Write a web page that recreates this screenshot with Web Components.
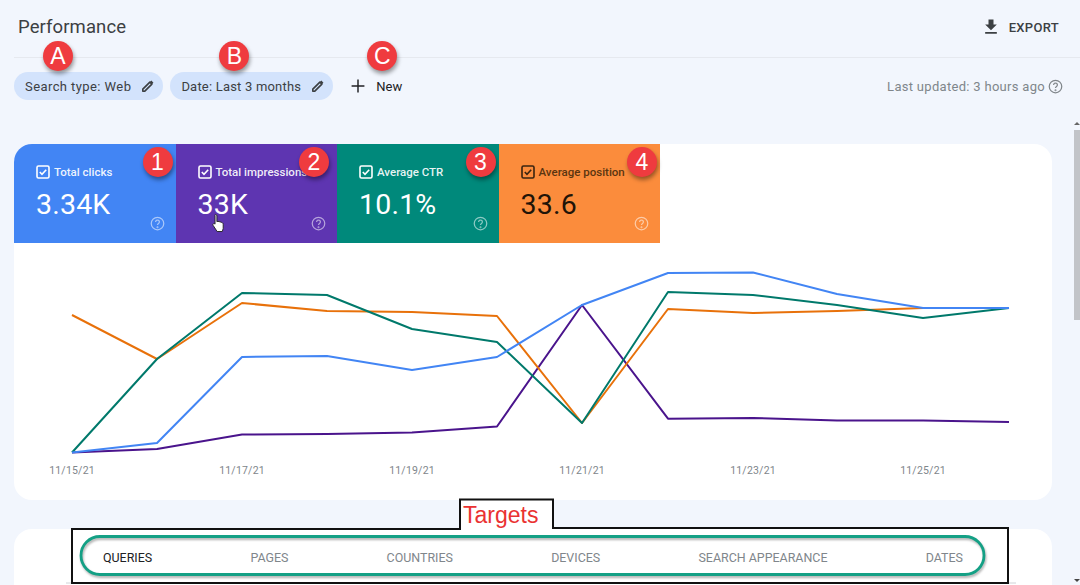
<!DOCTYPE html>
<html>
<head>
<meta charset="utf-8">
<title>Performance</title>
<style>
  html, body { margin: 0; height: 100%; overflow: hidden; background: #f2f6fd; }
  body { font-family: Roboto, "Liberation Sans", sans-serif; }
</style>
</head>
<body>
<perf-page>
  <perf-header slot="header" title="Performance"></perf-header>
  <filter-bar slot="filters">
    <filter-chip label="Search type: Web" mark="A" style="letter-spacing:.42px;--mark-x:29px"></filter-chip>
    <filter-chip label="Date: Last 3 months" mark="B" style="letter-spacing:.2px;--mark-x:49px"></filter-chip>
    <new-button mark="C"></new-button>
  </filter-bar>
  <chart-card slot="chart">
    <metric-tile slot="tiles" label="Total clicks" value="3.34K" color="#4285f4" mark="1"></metric-tile>
    <metric-tile slot="tiles" label="Total impressions" value="33K" color="#5e35b1" mark="2" cursor style="--mark-right:8px"></metric-tile>
    <metric-tile slot="tiles" label="Average CTR" value="10.1%" color="#00897b" mark="3"></metric-tile>
    <metric-tile slot="tiles" label="Average position" value="33.6" color="#fb8c3c" mark="4" dark></metric-tile>
    <line-chart slot="plot"></line-chart>
  </chart-card>
  <tab-card slot="tabs"></tab-card>
</perf-page>

<script>
class MarkBadge extends HTMLElement {
  constructor() {
    super();
    this.attachShadow({mode: 'open'}).innerHTML = `
      <style>
        :host {
          display: flex; align-items: center; justify-content: center;
          width: 30px; height: 30px; border-radius: 50%;
          background: #ef3b3f; color: #fff;
          font: 400 23px "Liberation Sans", Arial, sans-serif; letter-spacing: 0;
          box-shadow: 1px 3px 4px rgba(0,0,0,.4);
        }
      </style>
      <slot></slot>`;
  }
}
customElements.define('mark-badge', MarkBadge);

class PerfPage extends HTMLElement {
  constructor() {
    super();
    this.attachShadow({mode: 'open'}).innerHTML = `
      <style>
        :host { display: block; position: relative; width: 1080px; height: 585px; overflow: hidden; }
        .wrap { display: flex; flex-direction: column; padding-left: 14px; padding-right: 28px; }
        ::slotted([slot=chart]) { margin-top: 44px; }
        ::slotted([slot=tabs]) { margin-top: 29px; }
        .thumb { position: absolute; right: 0; top: 130px; width: 6px; height: 190px; background: #c2c4c8; }
        .arrow { position: absolute; right: 0; width: 0; height: 0; border: 3px solid transparent; }
        .up { top: 119px; border-bottom-color: #666; }
        .down { top: 579px; border-top-color: #444; }
      </style>
      <div class="wrap">
        <slot name="header"></slot>
        <slot name="filters"></slot>
        <slot name="chart"></slot>
        <slot name="tabs"></slot>
      </div>
      <div class="arrow up"></div>
      <div class="thumb"></div>
      <div class="arrow down"></div>`;
  }
}
customElements.define('perf-page', PerfPage);

class PerfHeader extends HTMLElement {
  constructor() {
    super();
    this.attachShadow({mode: 'open'}).innerHTML = `
      <style>
        :host {
          display: flex; align-items: center; justify-content: space-between;
          height: 58px; box-sizing: border-box; margin-right: -28px;
          padding: 0 21px 3px 4px; border-bottom: 1px solid #e6e9ef; color: #3c4043;
        }
        h1 { margin: 0; font: 400 18.5px Roboto, sans-serif; color: #3c4043; letter-spacing: .1px; }
        .export { display: flex; align-items: center; gap: 8px; font: 500 13px Roboto, sans-serif; letter-spacing: .3px; }
        svg { width: 20px; height: 20px; fill: #3c4043; }
      </style>
      <h1></h1>
      <div class="export">
        <svg viewBox="0 0 24 24"><path d="M19 9h-4V3H9v6H5l7 7 7-7zM5 18v2h14v-2H5z"/></svg>
        EXPORT
      </div>`;
    this.shadowRoot.querySelector('h1').textContent = this.getAttribute('title');
  }
}
customElements.define('perf-header', PerfHeader);

class FilterBar extends HTMLElement {
  constructor() {
    super();
    this.attachShadow({mode: 'open'}).innerHTML = `
      <style>
        :host {
          display: flex; align-items: center; gap: 7px;
          height: 28px; margin-top: 14px; margin-right: -11px;
          color: #80868b;
        }
        .right { margin-left: auto; display: flex; align-items: center; gap: 3px; font: 400 13px Roboto, sans-serif; letter-spacing: .3px; }
        svg { width: 15px; height: 15px; fill: none; stroke: #80868b; stroke-width: 2; }
      </style>
      <slot></slot>
      <div class="right">
        Last updated: 3 hours ago
        <svg viewBox="0 0 24 24"><circle cx="12" cy="12" r="10"/><path d="M9 9.5a3 3 0 1 1 4.6 2.5c-1 .7-1.6 1.3-1.6 2.5"/><circle cx="12" cy="18" r=".6"/></svg>
      </div>`;
  }
}
customElements.define('filter-bar', FilterBar);

class FilterChip extends HTMLElement {
  constructor() {
    super();
    this.attachShadow({mode: 'open'}).innerHTML = `
      <style>
        :host {
          display: inline-flex; align-items: center; gap: 9px; position: relative;
          height: 28px; box-sizing: border-box; padding: 0 8px 0 11px;
          border-radius: 14px; background: #d3e3fc; color: #3c4043;
          font: 400 13px Roboto, sans-serif; letter-spacing: .3px; white-space: nowrap;
        }
        svg { width: 15px; height: 15px; fill: none; stroke: #3c4043; stroke-width: 2.6; stroke-linejoin: round; }
        mark-badge { position: absolute; top: -31px; left: var(--mark-x, 29px); }
      </style>
      <span class="t"></span>
      <svg viewBox="0 0 24 24"><path d="M4.5 19.5v-3.2L15.8 5l3.2 3.2L7.7 19.5H4.5z"/><path d="M17 3.6l3.4 3.4" stroke-width="3.2"/></svg>
      <mark-badge></mark-badge>`;
    this.shadowRoot.querySelector('.t').textContent = this.getAttribute('label');
    this.shadowRoot.querySelector('mark-badge').textContent = this.getAttribute('mark');
  }
}
customElements.define('filter-chip', FilterChip);

class NewButton extends HTMLElement {
  constructor() {
    super();
    this.attachShadow({mode: 'open'}).innerHTML = `
      <style>
        :host {
          display: inline-flex; align-items: center; gap: 7px; position: relative;
          margin-left: 4px; padding: 0 3px; height: 22px; color: #202124;
          font: 400 13px Roboto, sans-serif;
        }
        svg { width: 22px; height: 22px; fill: #202124; }
        mark-badge { position: absolute; top: -34px; left: 23px; }
      </style>
      <svg viewBox="0 0 24 24"><path d="M19 12.8h-6.2V19h-1.6v-6.2H5v-1.6h6.2V5h1.6v6.2H19v1.6z"/></svg>
      New
      <mark-badge></mark-badge>`;
    this.shadowRoot.querySelector('mark-badge').textContent = this.getAttribute('mark');
  }
}
customElements.define('new-button', NewButton);

class ChartCard extends HTMLElement {
  constructor() {
    super();
    this.attachShadow({mode: 'open'}).innerHTML = `
      <style>
        :host { display: block; height: 356px; background: #fff; border-radius: 18px; }
        .tiles { display: flex; height: 99px; }
      </style>
      <div class="tiles"><slot name="tiles"></slot></div>
      <slot name="plot"></slot>`;
  }
}
customElements.define('chart-card', ChartCard);

class MetricTile extends HTMLElement {
  constructor() {
    super();
    const dark = this.hasAttribute('dark');
    const ink = dark ? '#3a2410' : '#fff';
    this.attachShadow({mode: 'open'}).innerHTML = `
      <style>
        :host {
          display: block; position: relative; flex: none;
          width: 161.5px; height: 99px; box-sizing: border-box; padding: 21px 22px;
          background: ${this.getAttribute('color')}; color: ${dark ? '#1f1408' : '#fff'};
        }
        :host(:first-child) { border-top-left-radius: 18px; }
        .top { display: flex; align-items: center; gap: 4px; font: 500 11.5px Roboto, sans-serif; white-space: nowrap; color: ${dark ? '#5a3510' : 'rgba(255,255,255,.92)'}; }
        .top svg { width: 14px; height: 14px; flex: none; fill: none; stroke: ${ink}; stroke-width: 1.6; }
        .val { margin-top: 9px; font: 400 28.5px/34px Roboto, sans-serif; letter-spacing: .2px; }
        .help { position: absolute; right: 11px; bottom: 12px; width: 15px; height: 15px; fill: none; stroke: rgba(255,255,255,.55); stroke-width: 2; }
        mark-badge { position: absolute; top: 3px; right: var(--mark-right, 3px); }
        .cursor { position: absolute; left: 36px; top: 69px; width: 14px; height: 20px; }
      </style>
      <div class="top">
        <svg viewBox="0 0 14 14"><rect x="1" y="1" width="12" height="12" rx="1.5"/><path d="M3.8 7l2.2 2.3 4.2-4.5"/></svg>
        <span class="label"></span>
      </div>
      <div class="val"></div>
      <svg class="help" viewBox="0 0 24 24"><circle cx="12" cy="12" r="10"/><path d="M9 9.5a3 3 0 1 1 4.6 2.5c-1 .7-1.6 1.3-1.6 2.5"/><circle cx="12" cy="18" r=".6"/></svg>
      ${this.hasAttribute('cursor') ? `<svg class="cursor" viewBox="0 0 12 17"><path d="M3 1.2c.8 0 1.2.5 1.2 1.2v5l.9-.3 1 .2 1 .3 1.2.4c.9.3 1.3.9 1.3 1.8v3.4l-.8 2.6H4.4L1 10.6c-.4-.6-.3-1.2.2-1.5.5-.3 1-.1 1.4.4V2.4c0-.7-.2-1.2.4-1.2z" fill="#fff" stroke="#222" stroke-width=".8"/></svg>` : ''}
      <mark-badge></mark-badge>`;
    this.shadowRoot.querySelector('.label').textContent = this.getAttribute('label');
    this.shadowRoot.querySelector('.val').textContent = this.getAttribute('value');
    this.shadowRoot.querySelector('mark-badge').textContent = this.getAttribute('mark');
  }
}
customElements.define('metric-tile', MetricTile);

class LineChart extends HTMLElement {
  constructor() {
    super();
    const xs = [72, 157, 242, 327, 412, 497, 582, 668, 753, 837, 923, 1009];
    const series = [
      ['#4a148c', [452.5, 449, 434.5, 434, 432.5, 426.5, 305, 418.7, 418, 420.5, 420.5, 422]],
      ['#e8710a', [315, 359, 303, 311, 312, 316, 423, 309, 313, 311, 308, 308]],
      ['#00796b', [452.5, 359, 293, 295, 329, 342, 423, 292, 295, 305, 318, 308]],
      ['#4285f4', [452.5, 443, 357, 356, 370, 357, 305, 273, 272.5, 294, 308, 308]],
    ];
    // card top is at y=144, tiles 99px tall: plot starts at y=243
    const lines = series.map(([c, ys]) =>
      `<polyline fill="none" stroke="${c}" stroke-width="2" stroke-linejoin="round" points="${ys.map((y, i) => (xs[i] - 14) + ',' + (y - 243)).join(' ')}"/>`
    ).join('');
    const ticks = [['11/15/21', 72], ['11/17/21', 242], ['11/19/21', 412], ['11/21/21', 582], ['11/23/21', 753], ['11/25/21', 923]];
    const labels = ticks.map(([t, x]) =>
      `<text x="${x - 14}" y="231" text-anchor="middle">${t}</text>`
    ).join('');
    this.attachShadow({mode: 'open'}).innerHTML = `
      <style>
        :host { display: block; height: 257px; }
        svg { display: block; width: 1038px; height: 257px; }
        text { font: 400 10.5px Roboto, sans-serif; fill: #80868b; letter-spacing: .2px; }
      </style>
      <svg viewBox="0 0 1038 257">${lines}${labels}</svg>`;
  }
}
customElements.define('line-chart', LineChart);

class TabCard extends HTMLElement {
  constructor() {
    super();
    this.attachShadow({mode: 'open'}).innerHTML = `
      <style>
        :host { display: block; position: relative; height: 70px; background: #fff; border-radius: 18px 18px 0 0; }
        .tabs {
          display: flex; justify-content: space-between; position: relative;
          padding: 21px 89px 0 89px; height: 55px; box-sizing: border-box;
          font: 400 12.45px Roboto, sans-serif; color: #80868b;
        }
        .tabs .on { color: #202124; }
        .mark { position: absolute; left: 0; top: -31px; width: 1038px; height: 87px; pointer-events: none; }
        .tag { position: absolute; left: 449px; top: -27px; color: #ea3232; font: 400 23px "Liberation Sans", Arial, sans-serif; }
      </style>
      <svg class="mark" viewBox="0 0 1038 87">
        <path d="M52 85 H1002" stroke="#cfd2d6" stroke-width="1"/>
        <path d="M58 31 H446 V1.5 H539 V30 H994 V85 H58 Z" fill="#fff" stroke="#111" stroke-width="2"/>
        <rect x="67" y="38.5" width="903" height="38" rx="19" fill="none" stroke="#14a085" stroke-width="2.8" style="filter:drop-shadow(1px 2px 1px rgba(0,0,0,.3))"/>
      </svg>
      <div class="tabs">
        <span class="on">QUERIES</span><span>PAGES</span><span>COUNTRIES</span><span>DEVICES</span><span>SEARCH APPEARANCE</span><span>DATES</span>
      </div>
      <div class="tag">Targets</div>`;
  }
}
customElements.define('tab-card', TabCard);
</script>
</body>
</html>
